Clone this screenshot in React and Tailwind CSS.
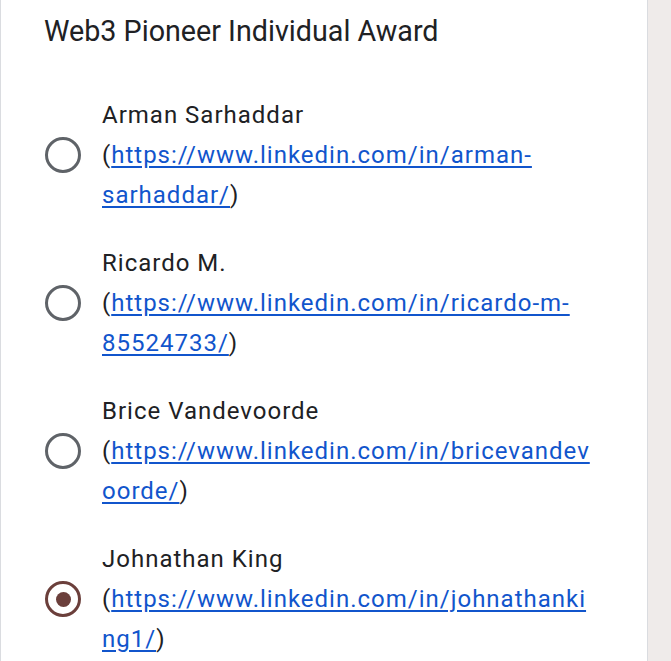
import React, { useState } from 'react';

const options = [
  { name: 'Arman Sarhaddar', url: 'https://www.linkedin.com/in/arman-sarhaddar/' },
  { name: 'Ricardo M.', url: 'https://www.linkedin.com/in/ricardo-m-85524733/' },
  { name: 'Brice Vandevoorde', url: 'https://www.linkedin.com/in/bricevandevoorde/' },
  { name: 'Johnathan King', url: 'https://www.linkedin.com/in/johnathanking1/' },
];

function Radio({ checked }) {
  return (
    <div
      className={
        'w-[36px] h-[36px] rounded-full border-[3px] flex items-center justify-center shrink-0 ' +
        (checked ? 'border-[#6b3f3b]' : 'border-[#5f6368]')
      }
    >
      {checked && <div className="w-[15px] h-[15px] rounded-full bg-[#6b3f3b]" />}
    </div>
  );
}

export default function App() {
  const [selected, setSelected] = useState(3);

  return (
    <div className="flex w-[671px] h-[661px] overflow-hidden bg-[#efebea] font-['Roboto',sans-serif]">
      <div className="w-[648px] h-full bg-white border-x border-[#dadce0]">
        <h2 className="pl-[43px] pt-[13px] text-[28.7px] leading-[36px] text-[#202124]">
          Web3 Pioneer Individual Award
        </h2>
        <div className="mt-[46px] flex flex-col gap-[28px]">
          {options.map((o, i) => (
            <div
              key={o.name}
              onClick={() => setSelected(i)}
              className="flex items-center pl-[44px] gap-[21px] cursor-pointer"
            >
              <Radio checked={selected === i} />
              <div className="w-[494px] text-[24px] tracking-[1px] leading-[40px] text-[#202124] [overflow-wrap:anywhere]">
                <div>{o.name}</div>
                <div>
                  (<a href={o.url} className="text-[#1155cc] underline underline-offset-[3px]">{o.url}</a>)
                </div>
              </div>
            </div>
          ))}
        </div>
      </div>
    </div>
  );
}
